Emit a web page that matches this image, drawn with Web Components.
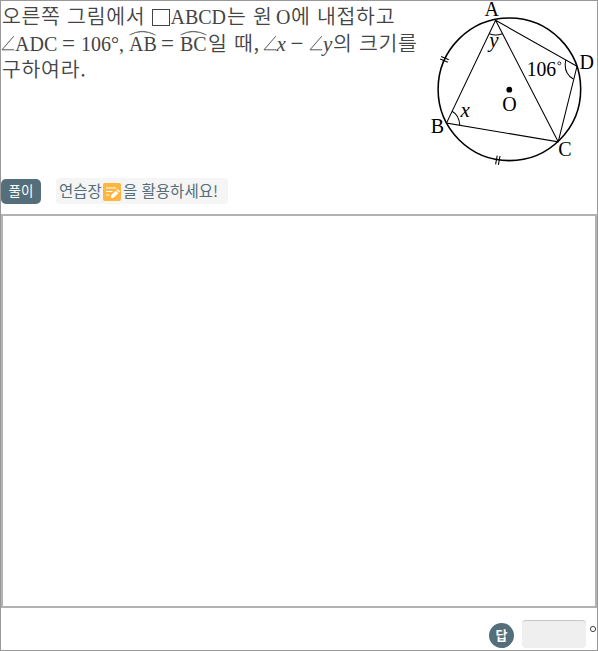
<!DOCTYPE html>
<html lang="ko">
<head>
<meta charset="utf-8">
<title>원과 내접사각형</title>
<style>
html,body{margin:0;height:100%;background:#fff}
</style>
</head>
<body>
<problem-page></problem-page>
<script>
const define = (name, html) => customElements.define(name, class extends HTMLElement {
  constructor() {
    super();
    this.attachShadow({mode: 'open'}).innerHTML = html;
  }
});

/* A run of text occupying a fixed advance width */
define('text-run', `<style>
:host{display:block;flex:none;white-space:pre;height:26px;line-height:26px}
:host([kind=ko]){font-family:"Noto Sans CJK KR",sans-serif;font-size:20.5px;font-weight:350;letter-spacing:.7px;margin-top:-2px}
:host([kind=math]){font-family:"Liberation Serif",serif;font-size:20px}
:host([kind=op]){font-family:"Liberation Serif",serif;font-size:23px}
:host([kind=var]){font-family:"Liberation Serif",serif;font-size:21px;font-style:italic}
</style><slot></slot>`);
define('math-angle', `<style>:host{display:block;flex:none;width:14px;height:26px}svg{display:block}</style>
<svg width="14" height="26" viewBox="0 0 14 26"><path d="M12.8 5.2L1 18.8H13.2" fill="none" stroke="#444" stroke-width=".9"/></svg>`);
define('math-square', `<style>:host{display:block;flex:none;width:19px;height:26px}svg{display:block}</style>
<svg width="19" height="26"><rect x=".5" y="5.5" width="17" height="16" fill="none" stroke="#444" stroke-width="1"/></svg>`);
define('math-arc', `<style>:host{display:block;flex:none;position:relative;height:26px;font:20px/26px "Liberation Serif",serif}
svg{position:absolute;left:0;top:-1px}</style><slot></slot>
<svg width="27" height="7"><path d="M.5 5Q13-2.5 26.5 5Q13-1.3.5 5Z" fill="#444" stroke="#444" stroke-width=".4"/></svg>`);

define('problem-text', `<style>
:host{display:flex;flex-direction:column;color:#444;width:424px;padding:3px 0 0 1px;box-sizing:border-box}
.l{display:flex;height:27px}
.l:first-child [kind=ko]{margin-top:-3px}
.l:last-child{margin-top:-1px}
</style>
<div class="l">
<text-run kind="ko" style="width:149.5px">오른쪽 그림에서</text-run><math-square></math-square><text-run kind="math" style="width:56.5px">ABCD</text-run><text-run kind="ko" style="width:49px">는 원</text-run><text-run kind="math" style="width:15px">O</text-run><text-run kind="ko">에 내접하고</text-run></div>
<div class="l">
<math-angle style="margin-left:-1px"></math-angle><text-run kind="math" style="width:47px">ADC</text-run><text-run kind="op" style="width:19px">=</text-run><text-run kind="math" style="width:48px">106°,</text-run><math-arc style="width:32px">AB</math-arc><text-run kind="op" style="width:19px">=</text-run><math-arc style="width:28px">BC</math-arc><text-run kind="ko" style="width:54.5px">일 때,</text-run><math-angle></math-angle><text-run kind="var" style="width:14px">x</text-run><text-run kind="op" style="width:18.5px">−</text-run><math-angle></math-angle><text-run kind="var" style="width:10px">y</text-run><text-run kind="ko">의 크기를</text-run></div>
<div class="l"><text-run kind="ko">구하여라.</text-run></div>`);

define('circle-figure', `<style>
:host{display:block;width:172px;height:172px}svg{display:block;overflow:visible}
text{font-family:"Liberation Serif",serif;font-size:20px;fill:#000}
.v{font-style:italic;font-size:21px}
</style>
<svg width="172" height="172" viewBox="425 1 172 172">
<g fill="none" stroke="#000" stroke-width="1.05">
<circle cx="509.4" cy="89.3" r="71.3" stroke-width="1.55"/>
<path d="M495.6 20.3L577 66.3L558.2 141.8L446.5 123Z M495.6 20.3L558.2 141.8"/>
<path d="M489.3 33.8Q496 36.3 502.3 33.7M452 111.2Q459.3 115 459.8 125.4M565.8 60Q563 73 573.3 79"/>
<path d="M441.2 56.5L448.8 59.7M440.2 59L447.8 62.2M497.2 155.7L495.6 164.3M500 156L498.4 164.8"/>
</g>
<circle cx="509.3" cy="89.7" r="2.9"/>
<text x="484.4" y="16.4">A</text><text x="579.4" y="69.4">D</text><text x="430.8" y="133.4">B</text><text x="558.3" y="156">C</text><text x="502.3" y="110.6">O</text>
<text class="v" x="489.3" y="46.5">y</text><text class="v" x="460.6" y="117">x</text>
<text x="526.7" y="76.3" textLength="29.5" lengthAdjust="spacingAndGlyphs">106</text><circle cx="559.3" cy="63.3" r="1.5" fill="none" stroke="#000" stroke-width=".8"/>
</svg>`);

define('memo-icon', `<style>:host{display:block;flex:none;width:18px;height:18px;margin-top:1px;white-space:normal}svg{display:block}</style>
<svg width="18" height="18"><rect width="18" height="18" rx="2" fill="#ffb640"/>
<path d="M3 5H13M3 8.5H9.5M3 12H6.5" stroke="#fff" stroke-width="1.2"/>
<path d="M8 15V12.6L12.8 7.8L15.2 10.2L10.4 15Z" fill="#fff"/><path d="M13.6 7L14.6 6L17 8.4L16 9.4Z" fill="#fff"/></svg>`);

define('solution-bar', `<style>
:host{display:flex;align-items:center;height:26px;font-family:"Noto Sans CJK KR",sans-serif;color:#546e7a}
b{display:block;width:40px;height:25px;border-radius:5px;background:#546e7a;color:#fff;font-weight:400;font-size:13.5px;line-height:23px;text-align:center;margin-right:15px}
.tip{display:flex;align-items:center;width:172px;height:26px;box-sizing:border-box;padding-left:3px;background:#f5f5f5;border-radius:4px;font-size:15.5px;line-height:24px;white-space:pre}
span{flex:none;height:26px}
</style><b>풀이</b><div class="tip"><span style="width:44px">연습장</span><memo-icon></memo-icon><span style="margin-left:2px">을 활용하세요!</span></div>`);

define('work-area', `<style>:host{display:block;box-sizing:border-box;height:394px;border:2px solid #b2b2b2;background:#fff}</style>`);

define('answer-row', `<style>
:host{display:flex;justify-content:flex-end;align-items:flex-start;height:30px}
b{width:25px;height:25px;margin:3px 8px 0 0;border-radius:50%;background:#546e7a;color:#fff;font:700 13px/24px "Noto Sans CJK KR",sans-serif;text-align:center}
.in{width:64px;height:28px;box-sizing:border-box;border-radius:4px;background:#efefef;border-top:1px solid #c8c8c8}
svg{width:7px;height:8px;margin:5px 0 0 4px}
</style><b>답</b><div class="in"></div><svg viewBox="0 0 7 8"><circle cx="3" cy="4" r="2.6" fill="none" stroke="#444" stroke-width="1"/></svg>`);

define('problem-page', `<style>
:host{display:block;box-sizing:border-box;width:598px;height:651px;border:1px solid #999;background:#fff;overflow:hidden}
header{display:flex;height:177px}
solution-bar{margin-bottom:10px}
answer-row{margin-top:12px}
</style>
<header><problem-text></problem-text><circle-figure></circle-figure></header>
<solution-bar></solution-bar><work-area></work-area><answer-row></answer-row>`);
</script>
</body>
</html>
